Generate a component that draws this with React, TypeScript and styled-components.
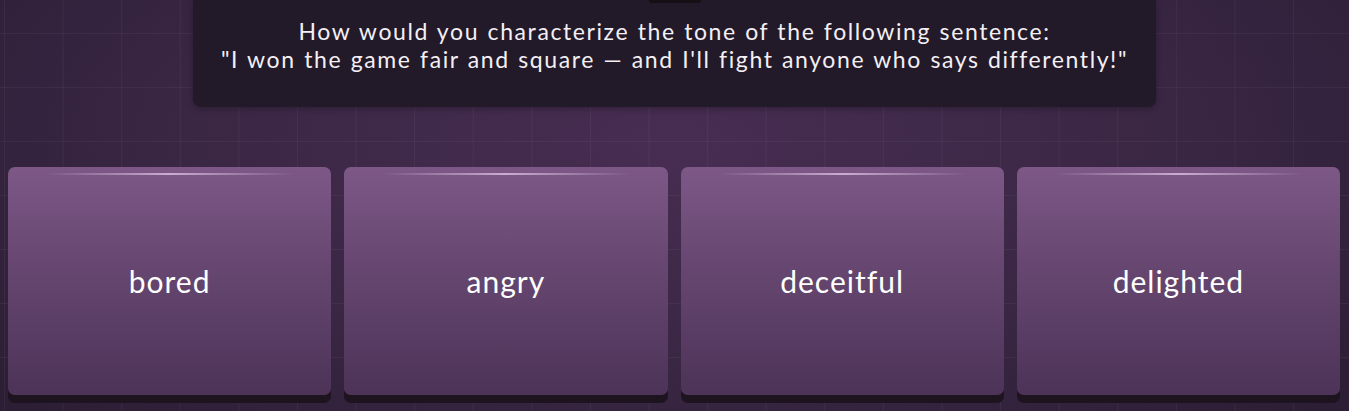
import styled, { createGlobalStyle } from 'styled-components';

const GlobalStyle = createGlobalStyle`
html, body {
    margin: 0;
    padding: 0;
    height: 411px;
    overflow: hidden;
}
body {
    font-family: "Lato", "Open Sans", sans-serif;
    background-color: #2c1e35;
}
`;

const Stage = styled.div`
position: relative;
height: 411px;
display: flex;
flex-direction: column;
align-items: center;
background:
    linear-gradient(rgba(255, 255, 255, 0.045) 1px, transparent 1px) 0 33px / 100% 54px,
    linear-gradient(90deg, rgba(255, 255, 255, 0.045) 1px, transparent 1px) 4px 0 / 58.6px 100%,
    radial-gradient(ellipse 65% 95% at 50% 35%, #472d52 0%, #3a2744 55%, #2c1e35 100%);
`;

const QuestionPanel = styled.div`
position: relative;
box-sizing: border-box;
width: 963px;
height: 107px;
padding-top: 17px;
background: #221a28;
border-radius: 0 0 8px 8px;
box-shadow: 0 2px 6px rgba(0, 0, 0, 0.25);
text-align: center;
color: #f4eff5;
font-size: 23px;
line-height: 28px;
letter-spacing: 1.6px;
word-spacing: 1px;
`;

const TimerTab = styled.div`
position: absolute;
top: 0;
left: 50%;
width: 52px;
height: 3px;
transform: translateX(-50%);
background: #141014;
border-radius: 0 0 10px 10px;
`;

const AnswerRow = styled.section`
box-sizing: border-box;
width: 100%;
margin-top: 60px;
padding: 0 9px 0 8px;
display: grid;
grid-template-columns: repeat(4, 1fr);
gap: 13px;
`;

const AnswerCard = styled.button`
position: relative;
height: 228px;
border: none;
border-radius: 7px;
background: linear-gradient(180deg, #7d5887 0%, #684872 40%, #4d3358 100%);
box-shadow: 0 8px 0 #1e1420;
color: #ffffff;
font-family: inherit;
font-size: 30px;
letter-spacing: 1px;
cursor: pointer;
display: flex;
align-items: center;
justify-content: center;

&::before {
    content: '';
    position: absolute;
    top: 6px;
    left: 11.5%;
    right: 11.5%;
    height: 2px;
    background: linear-gradient(90deg, transparent, rgba(235, 210, 240, 0.7) 50%, transparent);
}
`;

const answers = ['bored', 'angry', 'deceitful', 'delighted'];

function App() {
    return (
        <>
            <GlobalStyle />
            <Stage>
                <QuestionPanel>
                    <TimerTab />
                    How would you characterize the tone of the following sentence:
                    <br />
                    "I won the game fair and square — and I'll fight anyone who says differently!"
                </QuestionPanel>
                <AnswerRow>
                    {answers.map((answer) => (
                        <AnswerCard key={answer}>{answer}</AnswerCard>
                    ))}
                </AnswerRow>
            </Stage>
        </>
    );
}

export default App;
